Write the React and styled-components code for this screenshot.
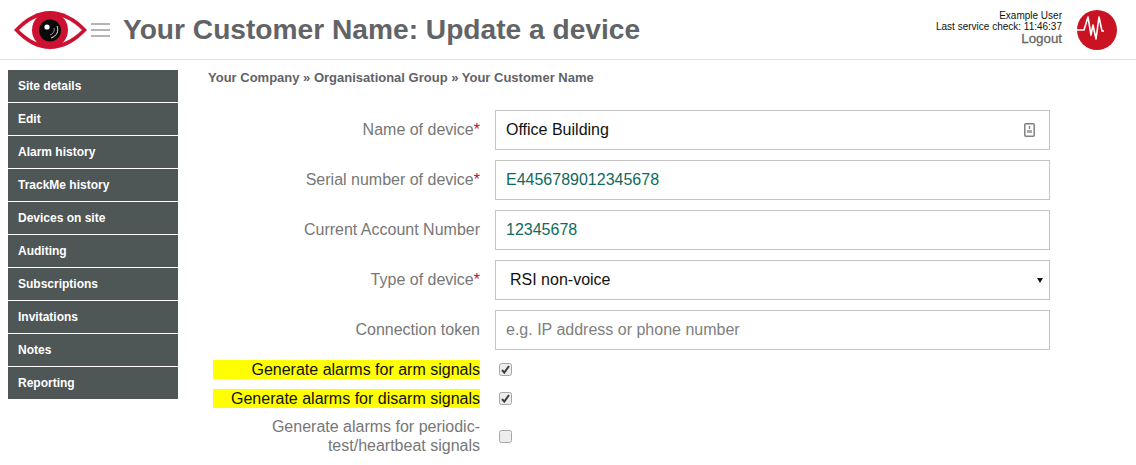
import React from "react";
import styled, { createGlobalStyle } from "styled-components";

const Global = createGlobalStyle`
  html, body { margin: 0; padding: 0; background: #fff; }
  body { font-family: "Liberation Sans", Arial, sans-serif; overflow: hidden; height: 465px; }
  * { box-sizing: border-box; }
`;
const Page = styled.div`display: flex; flex-direction: column; width: 1136px; height: 465px; overflow: hidden;`;
const Header = styled.header`
  height: 60px; flex: none; border-bottom: 1px solid #e1e1e1; display: flex; align-items: center; padding: 0 0 0 14px;
`;
const Menu = styled.div`
  width: 19px; margin-left: 4px; margin-right: 13px; margin-top: 1px; display: flex; flex-direction: column; gap: 4px;
  span { display: block; height: 2px; background: #b5b5b5; }
`;
const Title = styled.h1`margin: 0; font-size: 28.15px; font-weight: 700; color: #626366; flex: 1; line-height: 60px; white-space: nowrap;`;
const UserBox = styled.div`
  display: flex; flex-direction: column; align-items: flex-end; margin-right: 15px; color: #111; font-size: 10px; line-height: 11px; margin-top: -4px;
`;
const Logout = styled.a`font-size: 13.3px; line-height: 13px; color: #666; font-weight: 400; -webkit-text-stroke: 0.3px #666;`;
const Body = styled.div`display: flex; flex: 1; min-height: 0;`;
const Side = styled.nav`width: 170px; margin: 10px 0 0 8px; flex: none; display: flex; flex-direction: column; gap: 1px;`;
const SideItem = styled.a`
  height: 32px; background: #4f5656; color: #fff; font-size: 12px; font-weight: 700; padding-left: 10px; display: flex; align-items: center;
`;
const Main = styled.main`flex: 1; padding: 10px 0 0 30px; min-width: 0;`;
const Crumb = styled.div`font-size: 13px; font-weight: 700; color: #626366; line-height: 15px; margin-bottom: 25px;`;
const Form = styled.div`display: flex; flex-direction: column; width: 837px; margin-left: 5px;`;
const Row = styled.div`display: flex; align-items: center; height: 40px; margin-bottom: 10px;`;
const CheckRow = styled.div`display: flex; align-items: center; min-height: 19px; margin-bottom: ${p => p.$mb}px;`;
const Label = styled.label`
  width: 267px; flex: none; text-align: right; font-size: 16px; line-height: 19px; color: #777;
  background: ${p => p.$hl ? "#ffff00" : "transparent"};
  ${p => p.$hl ? "color: #111;" : ""}
  ${Row} > & { margin-bottom: 2px; }
`;
const Req = styled.span`color: #b5122b; font-size: 16px;`;
const Field = styled.div`
  margin-left: 15px; width: 555px; height: 40px; border: 1px solid #c4c4c4; display: flex; align-items: center; padding: 0 14px 0 10px;
  font-size: 16px; color: ${p => p.$c || "#111"}; justify-content: space-between;
`;
const SelectField = styled(Field)`padding: 0 6px 0 14px;`;
const Arrow = styled.span`width: 0; height: 0; border-left: 3.5px solid transparent; border-right: 3.5px solid transparent; border-top: 5px solid #111;`;
const Check = styled.span`
  margin-left: 19px; width: 13px; height: 13px; border: 1px solid #a6a6a6; border-radius: 2.5px;
  background: #ededed; display: flex; align-items: center; justify-content: center;
`;
const Avatar = styled.svg`width: 40px; height: 40px; margin-right: 19px; flex: none;`;

const items = ["Site details","Edit","Alarm history","TrackMe history","Devices on site","Auditing","Subscriptions","Invitations","Notes","Reporting"];

const Tick = () => (
  <svg width="9" height="9" viewBox="0 0 9 9"><path d="M1 5l2.3 2.6L8 1" fill="none" stroke="#3c3c3c" strokeWidth="2"/></svg>
);

export default function App() {
  return (
    <Page>
      <Global />
      <Header>
        <svg width="73" height="38" viewBox="0 0 73 38">
          <path d="M0 19C12 6 24 0 36 0s25 6 37 19c-12 13-25 19-37 19S12 32 0 19z" fill="#cc1230"/>
          <path d="M5 19C15 9 26 4 36 4s22 5 32 15c-10 10-22 15-32 15S15 29 5 19z" fill="#fff"/>
          <circle cx="36" cy="19" r="18" fill="#cc1230"/>
          <circle cx="36" cy="19.5" r="11" fill="#0a0a0a"/>
          <circle cx="33" cy="16" r="2.6" fill="#fff"/>
          <path d="M43 15c2 5 0 10-6 12" fill="none" stroke="#e4e4e4" strokeWidth="1"/>
          <path d="M40 17c1 3-1 6-4 7" fill="none" stroke="#999" strokeWidth="1"/>
        </svg>
        <Menu><span /><span /><span /></Menu>
        <Title>Your Customer Name: Update a device</Title>
        <UserBox>
          <span>Example User</span>
          <span>Last service check: 11:46:37</span>
          <Logout>Logout</Logout>
        </UserBox>
        <Avatar viewBox="0 0 40 40">
          <circle cx="20" cy="20" r="20" fill="#c91322"/>
          <path d="M0 20h7l4-13 3 18 2-10 3 14 3-22 3 14h2" fill="none" stroke="#fff" strokeWidth="1.6" strokeLinejoin="round"/>
        </Avatar>
      </Header>
      <Body>
        <Side>{items.map(i => <SideItem key={i}>{i}</SideItem>)}</Side>
        <Main>
          <Crumb>Your Company » Organisational Group » Your Customer Name</Crumb>
          <Form>
            <Row>
              <Label>Name of device<Req>*</Req></Label>
              <Field>
                Office Building
                <svg width="11" height="14" viewBox="0 0 11 14"><rect x="0.8" y="0.8" width="9.4" height="12.4" rx="1" fill="none" stroke="#808080" strokeWidth="1.5"/><path d="M5.5 3v3" stroke="#888" strokeWidth="1.4"/><rect x="3" y="7" width="5" height="3" fill="#aaa"/></svg>
              </Field>
            </Row>
            <Row><Label>Serial number of device<Req>*</Req></Label><Field $c="#0f6a5f">E4456789012345678</Field></Row>
            <Row><Label>Current Account Number</Label><Field $c="#0f6a5f">12345678</Field></Row>
            <Row><Label>Type of device<Req>*</Req></Label><SelectField>RSI non-voice<Arrow /></SelectField></Row>
            <Row><Label>Connection token</Label><Field $c="#808080">e.g. IP address or phone number</Field></Row>
            <CheckRow $mb={10}><Label $hl>Generate alarms for arm signals</Label><Check><Tick /></Check></CheckRow>
            <CheckRow $mb={9}><Label $hl>Generate alarms for disarm signals</Label><Check><Tick /></Check></CheckRow>
            <CheckRow $mb={0}><Label>Generate alarms for periodic-<br/>test/heartbeat signals</Label><Check /></CheckRow>
          </Form>
        </Main>
      </Body>
    </Page>
  );
}
